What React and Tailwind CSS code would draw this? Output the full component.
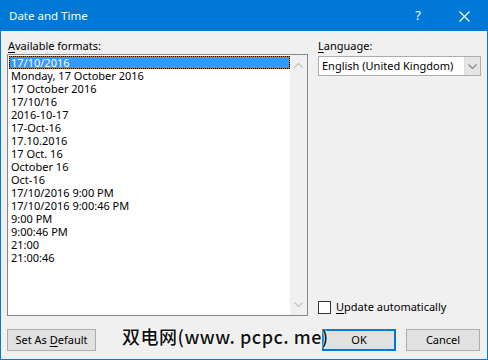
import React from "react";

const formats = [
  "17/10/2016",
  "Monday, 17 October 2016",
  "17 October 2016",
  "17/10/16",
  "2016-10-17",
  "17-Oct-16",
  "17.10.2016",
  "17 Oct. 16",
  "October 16",
  "Oct-16",
  "17/10/2016 9:00 PM",
  "17/10/2016 9:00:46 PM",
  "9:00 PM",
  "9:00:46 PM",
  "21:00",
  "21:00:46",
];

const Chevron = ({ up, color = "#c2c2c2" }) => (
  <svg width="9" height="5" viewBox="0 0 9 5" className="block">
    <path
      d={up ? "M0.5 4.5 L4.5 0.5 L8.5 4.5" : "M0.5 0.5 L4.5 4.5 L8.5 0.5"}
      stroke={color}
      strokeWidth="1.2"
      fill="none"
    />
  </svg>
);

const App = () => {
  return (
    <div
      className="w-[488px] h-[360px] flex flex-col border border-[#0078d7] bg-[#f0f0f0] text-[11px] text-black"
      style={{ fontFamily: '"Segoe UI", "Noto Sans", sans-serif' }}
    >
      {/* title bar */}
      <div className="h-[30px] bg-[#0078d7] flex items-center text-white shrink-0">
        <span className="pl-[8px] text-[11.5px] flex-1">Date and Time</span>
        <span className="w-[20px] text-center text-[13px] mr-[31px]">?</span>
        <svg width="11" height="11" viewBox="0 0 11 11" className="mr-[17px]">
          <path d="M0.5 0.5 L10.5 10.5 M10.5 0.5 L0.5 10.5" stroke="#fff" strokeWidth="1.1" />
        </svg>
      </div>

      {/* body */}
      <div className="relative flex-1 px-[6px] pt-[7px]">
        <div className="grid grid-cols-[301px_163px] gap-x-[10px]">
          {/* left column */}
          <div className="flex flex-col">
            <div className="h-[16px] leading-[16px] pl-[1px]">
              <span className="underline underline-offset-2">A</span>vailable formats:
            </div>
            <div className="h-[262px] border border-[#828790] bg-white flex">
              <div className="flex-1 pt-[1px] pl-[1px]">
                {formats.map((f, index) => (
                  <div key={index} className="h-[13px] leading-[13px] whitespace-nowrap">
                    {index === 0 ? (
                      <div className="h-[13px] border border-dotted border-black bg-[#d06a00]">
                        <div className="h-full bg-[#3399ff] text-white leading-[11px] pl-[1px]">{f}</div>
                      </div>
                    ) : (
                      <div className="pl-[2px]">{f}</div>
                    )}
                  </div>
                ))}
              </div>
              <div className="w-[17px] bg-[#f0f0f0] flex flex-col items-center justify-between py-[8px]">
                <Chevron up />
                <Chevron />
              </div>
            </div>
          </div>

          {/* right column */}
          <div className="flex flex-col">
            <div className="h-[18px] leading-[16px]">
              <span className="underline underline-offset-2">L</span>anguage:
            </div>
            <div className="h-[20px] border border-[#adadad] bg-white flex">
              <div className="flex-1 pl-[3px] leading-[18px] whitespace-nowrap">English (United Kingdom)</div>
              <div className="w-[16px] bg-[#e5e5e5] border-l border-[#dcdcdc] flex items-center justify-center">
                <Chevron color="#8a8a8a" />
              </div>
            </div>
            <div className="flex-1" />
            <div className="flex items-center gap-[5px] mb-[1px]">
              <div className="w-[13px] h-[13px] border border-[#333] bg-white" />
              <span className="leading-[16px]">
                <span className="underline underline-offset-2">U</span>pdate automatically
              </span>
            </div>
          </div>

          {/* buttons */}
          <div className="mt-[13px]">
            <button className="w-[89px] h-[22px] border border-[#adadad] bg-[#e1e1e1] leading-[20px]">
              Set As <span className="underline underline-offset-2">D</span>efault
            </button>
          </div>
          <div className="mt-[13px] flex justify-end gap-[10px] pr-[1px]">
            <button className="w-[74px] h-[22px] border-2 border-[#0078d7] bg-[#e1e1e1] leading-[18px]">OK</button>
            <button className="w-[74px] h-[22px] border border-[#adadad] bg-[#e1e1e1] leading-[20px]">Cancel</button>
          </div>
        </div>

        {/* watermark overlay */}
        <div
          className="absolute left-[121px] top-[293px] text-[18px] leading-[24px] text-[#111] font-medium tracking-[0.5px]"
          style={{
            fontFamily: '"Noto Sans CJK SC", sans-serif',
            textShadow: "0 0 2px #fff, 0 0 2px #fff",
          }}
        >
          双电网(www. pcpc. me)
        </div>
      </div>
    </div>
  );
};

export default App;
